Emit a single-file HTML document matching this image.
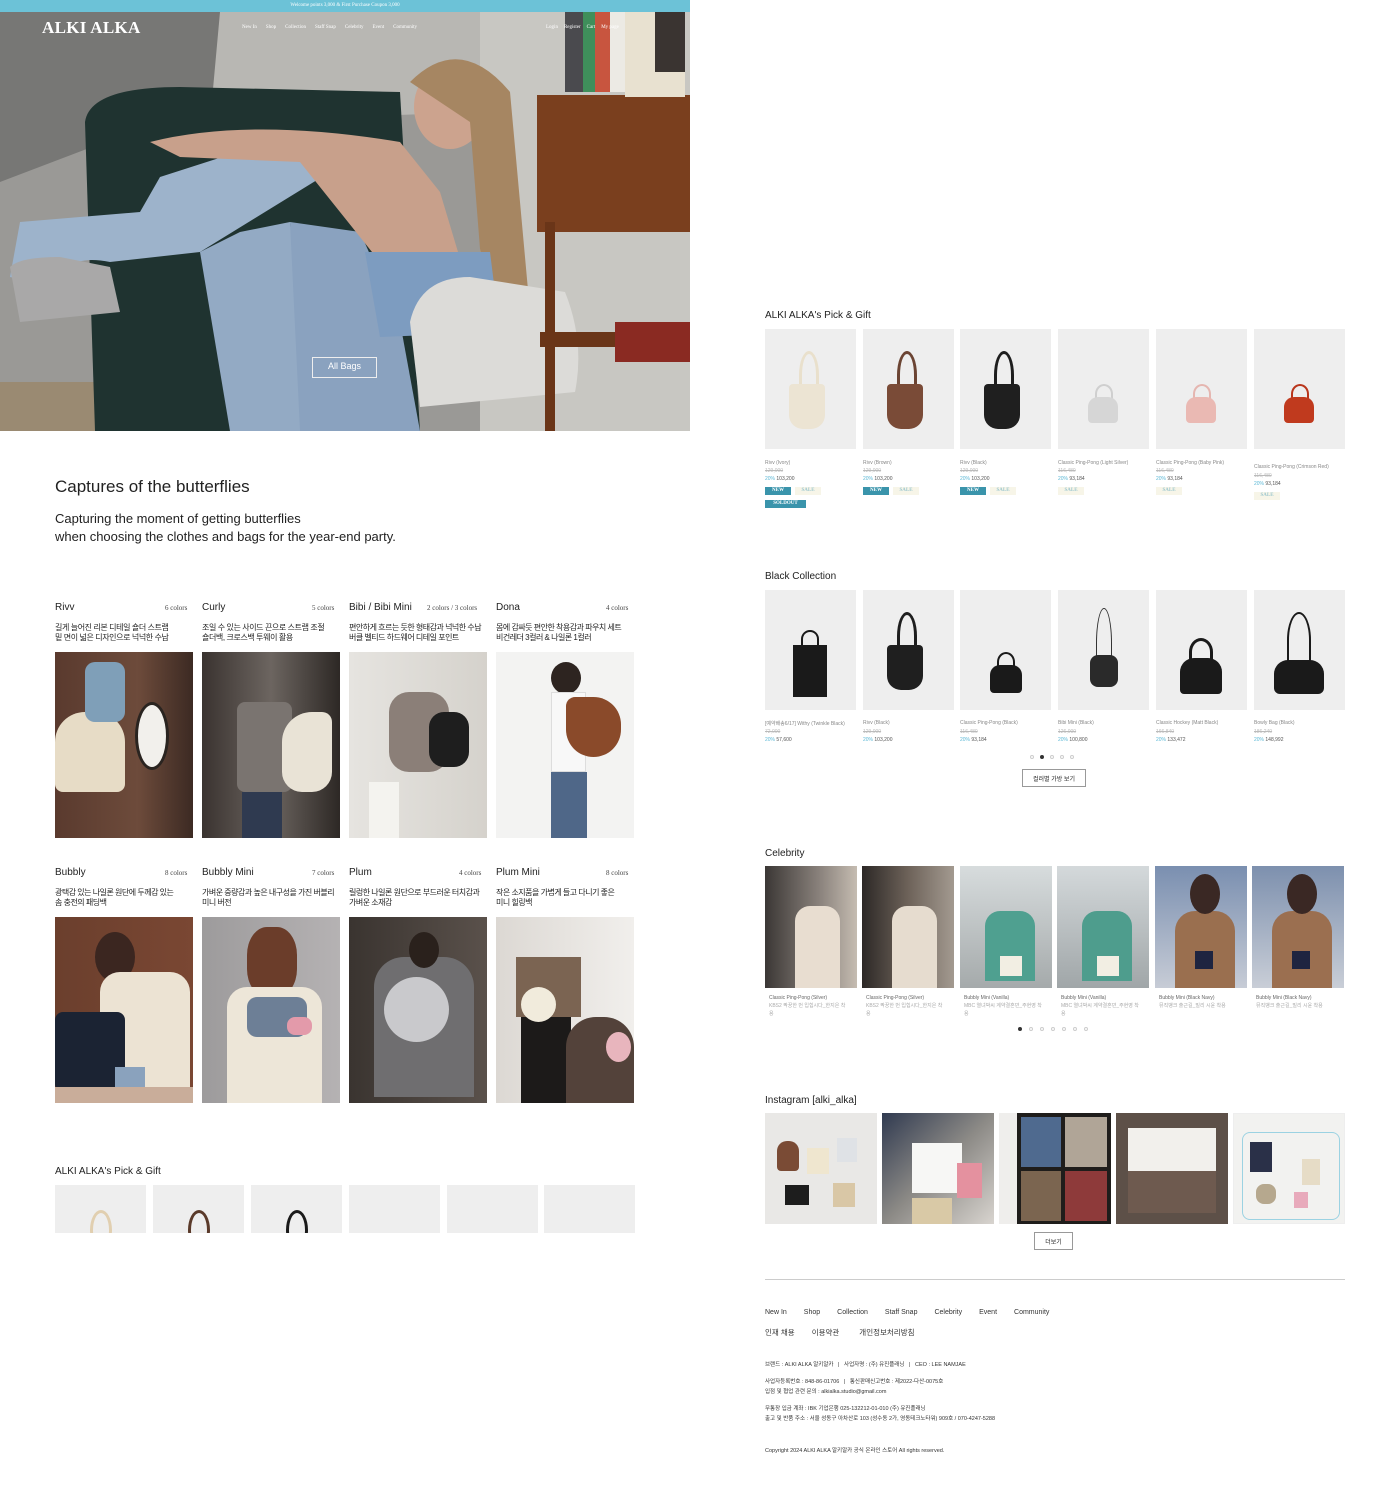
<!DOCTYPE html>
<html><head><meta charset="utf-8">
<style>
*{margin:0;padding:0;box-sizing:border-box}
body{width:1400px;height:1489px;background:#fff;position:relative;overflow:hidden;font-family:"Liberation Sans","Noto Sans CJK KR",sans-serif;color:#222}
.a{position:absolute}
.t{position:absolute;white-space:nowrap}
.tile{position:absolute;background:#eeeeee;overflow:hidden}
.nm{font-size:5px;color:#888}
.or{font-size:5px;color:#bbb;text-decoration:line-through}
.pr{font-size:5px;color:#555}.pr b{color:#5cb8d6;font-weight:normal}
.bd{position:absolute;height:8px;font:bold 5px "Liberation Serif",serif;line-height:8px;text-align:center}
.new{background:#3a94ab;color:#fff;width:26px}
.sale{background:#f7f5e8;color:#9cc7cf;width:26px}
.dot{position:absolute;width:4px;height:4px;border-radius:50%;border:1px solid #ccc}
.dot.on{background:#333;border-color:#333}
</style></head><body>

<div class="a" style="left:0;top:0;width:690px;height:12px;background:#6cc2d7"></div>
<div class="t" style="left:0;top:3px;width:690px;text-align:center;font:5px 'Liberation Serif',serif;color:#fff">Welcome points 3,000 &amp; First Purchase Coupon 3,000</div>

<div class="a" style="left:0;top:12px;width:690px;height:419px;overflow:hidden;background:#8a8a88">
<svg width="690" height="419" viewBox="0 0 690 419">
<rect width="690" height="419" fill="#9a9996"/>
<polygon points="0,0 280,0 210,90 0,170" fill="#777775"/>
<polygon points="220,0 480,0 480,100 210,110" fill="#b8b7b3"/>
<rect x="480" y="0" width="210" height="419" fill="#c8c7c2"/>
<rect x="0" y="370" width="110" height="49" fill="#9a8a72"/>
<path d="M85 110 Q90 75 180 75 L400 80 L420 419 L95 419 Z" fill="#1f3330"/>
<path d="M60 280 Q60 240 110 250 L200 240 L330 160 L350 130 L300 120 L160 165 L140 200 L20 210 L10 265 L60 275Z" fill="#9db3cb"/>
<path d="M200 240 L240 220 L290 210 L310 419 L230 419 Z" fill="#93aac4"/>
<path d="M290 210 L360 220 L400 310 L420 419 L300 419 Z" fill="#8aa2bf"/>
<path d="M10 255 Q20 245 60 245 L110 255 L120 300 L20 310 Z" fill="#a9a8a8"/>
<path d="M150 130 Q250 105 400 130 L440 180 L470 280 L380 250 L300 150 L180 145 Z" fill="#c8a08b"/>
<ellipse cx="450" cy="95" rx="36" ry="42" fill="#cca38e"/>
<path d="M410 70 Q460 20 510 80 L530 300 L485 300 L470 110 Z" fill="#a68662"/>
<path d="M365 240 L490 240 L500 320 L380 325 Z" fill="#7d9cc0"/>
<path d="M410 310 Q420 265 470 265 L565 280 Q585 330 575 380 L420 395 Z" fill="#dcdbd8"/>
<rect x="537" y="83" width="153" height="137" fill="#7a3f1e"/>
<rect x="545" y="210" width="10" height="209" fill="#6a3518"/>
<rect x="540" y="320" width="150" height="15" fill="#6a3518"/>
<rect x="615" y="310" width="75" height="40" fill="#8a2a22"/>
<rect x="565" y="0" width="18" height="80" fill="#4a4a4e"/>
<rect x="583" y="0" width="12" height="80" fill="#3f8f5b"/>
<rect x="595" y="0" width="15" height="80" fill="#c8553f"/>
<rect x="610" y="0" width="15" height="80" fill="#eceae4"/>
<rect x="625" y="0" width="60" height="85" fill="#e8e1d0"/>
<rect x="655" y="0" width="30" height="60" fill="#3a3431"/>
</svg>
</div>
<div class="t" style="left:42px;top:18px;font:bold 17px 'Liberation Serif',serif;color:#fff;letter-spacing:.3px">ALKI ALKA</div>
<div class="t" style="left:242px;top:25px;font:5px 'Liberation Serif',serif;color:#fff">
<span style="margin-right:9px">New In</span><span style="margin-right:9px">Shop</span><span style="margin-right:9px">Collection</span><span style="margin-right:9px">Staff Snap</span><span style="margin-right:9px">Celebrity</span><span style="margin-right:9px">Event</span><span>Community</span></div>
<div class="t" style="left:546px;top:25px;font:5px 'Liberation Serif',serif;color:#fff"><span style="margin-right:6px">Login</span><span style="margin-right:6px">Register</span><span style="margin-right:6px">Cart</span><span>My page</span></div>
<div class="a" style="left:312px;top:357px;width:65px;height:21px;border:1px solid #eee"></div>
<div class="t" style="left:312px;top:361px;width:65px;text-align:center;font-size:9px;color:#fff">All Bags</div>

<div class="t" style="left:55px;top:477px;font-size:17px;color:#222">Captures of the butterflies</div>
<div class="t" style="left:55px;top:510px;font-size:13px;line-height:18px;color:#222">Capturing the moment of getting butterflies<br>when choosing the clothes and bags for the year-end party.</div>

<div class="t" style="left:55px;top:602px;font-size:10px">Rivv</div><div class="t" style="left:165px;top:604px;font:7px 'Liberation Serif',serif;color:#444">6 colors</div>
<div class="t" style="left:202px;top:602px;font-size:10px">Curly</div><div class="t" style="left:312px;top:604px;font:7px 'Liberation Serif',serif;color:#444">5 colors</div>
<div class="t" style="left:349px;top:602px;font-size:10px">Bibi / Bibi Mini</div><div class="t" style="left:427px;top:604px;font:7px 'Liberation Serif',serif;color:#444">2 colors / 3 colors</div>
<div class="t" style="left:496px;top:602px;font-size:10px">Dona</div><div class="t" style="left:606px;top:604px;font:7px 'Liberation Serif',serif;color:#444">4 colors</div>
<div class="t" style="left:55px;top:623px;font-size:8px;line-height:10px;letter-spacing:-.4px">길게 늘어진 리본 디테일 숄더 스트랩<br>밑 면이 넓은 디자인으로 넉넉한 수납</div>
<div class="t" style="left:202px;top:623px;font-size:8px;line-height:10px;letter-spacing:-.4px">조일 수 있는 사이드 끈으로 스트랩 조절<br>숄더백, 크로스백 투웨이 활용</div>
<div class="t" style="left:349px;top:623px;font-size:8px;line-height:10px;letter-spacing:-.5px">편안하게 흐르는 듯한 형태감과 넉넉한 수납<br>버클 벨티드 하드웨어 디테일 포인트</div>
<div class="t" style="left:496px;top:623px;font-size:8px;line-height:10px;letter-spacing:-.5px">몸에 감싸듯 편안한 착용감과 파우치 세트<br>비건레더 3컬러 &amp; 나일론 1컬러</div>

<div class="a" style="left:55px;top:652px;width:138px;height:186px;background:linear-gradient(90deg,#5a3a2e,#6d4b3b 60%,#3c2a23)"><div class="a" style="left:0;top:60px;width:70px;height:80px;background:#e7dcc6;border-radius:30px 30px 8px 8px"></div><div class="a" style="left:80px;top:50px;width:34px;height:68px;border-radius:50%;background:#f2f0ec;border:3px solid #2a2420"></div><div class="a" style="left:30px;top:10px;width:40px;height:60px;background:#7f9fb8;border-radius:10px"></div></div>
<div class="a" style="left:202px;top:652px;width:138px;height:186px;background:linear-gradient(90deg,#3a3330,#6c6560 50%,#2d2825)"><div class="a" style="left:35px;top:50px;width:55px;height:90px;background:#7a7470;border-radius:8px"></div><div class="a" style="left:80px;top:60px;width:50px;height:80px;background:#e9e3d6;border-radius:30px 10px 20px 20px"></div><div class="a" style="left:40px;top:140px;width:40px;height:46px;background:#2f3a50"></div></div>
<div class="a" style="left:349px;top:652px;width:138px;height:186px;background:linear-gradient(90deg,#e6e4e0,#d5d2cc)"><div class="a" style="left:40px;top:40px;width:60px;height:80px;background:#8b7f78;border-radius:20px"></div><div class="a" style="left:80px;top:60px;width:40px;height:55px;background:#1e1e1e;border-radius:15px"></div><div class="a" style="left:20px;top:130px;width:30px;height:56px;background:#f4f3ef"></div></div>
<div class="a" style="left:496px;top:652px;width:138px;height:186px;background:#f3f3f2"><div class="a" style="left:55px;top:10px;width:30px;height:32px;background:#2d2420;border-radius:50%"></div><div class="a" style="left:55px;top:40px;width:35px;height:80px;background:#f8f8f8;border:1px solid #ddd"></div><div class="a" style="left:70px;top:45px;width:55px;height:60px;background:#8a4a2a;border-radius:10px 30px 30px 30px"></div><div class="a" style="left:55px;top:120px;width:36px;height:66px;background:#4f6788"></div></div>

<div class="t" style="left:55px;top:867px;font-size:10px">Bubbly</div><div class="t" style="left:165px;top:869px;font:7px 'Liberation Serif',serif;color:#444">8 colors</div>
<div class="t" style="left:202px;top:867px;font-size:10px">Bubbly Mini</div><div class="t" style="left:312px;top:869px;font:7px 'Liberation Serif',serif;color:#444">7 colors</div>
<div class="t" style="left:349px;top:867px;font-size:10px">Plum</div><div class="t" style="left:459px;top:869px;font:7px 'Liberation Serif',serif;color:#444">4 colors</div>
<div class="t" style="left:496px;top:867px;font-size:10px">Plum Mini</div><div class="t" style="left:606px;top:869px;font:7px 'Liberation Serif',serif;color:#444">8 colors</div>
<div class="t" style="left:55px;top:888px;font-size:8px;line-height:10px;letter-spacing:-.5px">광택감 있는 나일론 원단에 두께감 있는<br>솜 충전의 패딩백</div>
<div class="t" style="left:202px;top:888px;font-size:8px;line-height:10px;letter-spacing:-.5px">가벼운 중량감과 높은 내구성을 가진 버블리<br>미니 버전</div>
<div class="t" style="left:349px;top:888px;font-size:8px;line-height:10px;letter-spacing:-.5px">릴렁한 나일론 원단으로 부드러운 터치감과<br>가벼운 소재감</div>
<div class="t" style="left:496px;top:888px;font-size:8px;line-height:10px;letter-spacing:-.5px">작은 소지품을 가볍게 들고 다니기 좋은<br>미니 힐링백</div>

<div class="a" style="left:55px;top:917px;width:138px;height:186px;background:linear-gradient(90deg,#6b3f2d,#7a4733)"><div class="a" style="left:40px;top:15px;width:40px;height:50px;background:#3b2620;border-radius:50%"></div><div class="a" style="left:45px;top:55px;width:90px;height:120px;background:#ece3d3;border-radius:20px 20px 0 0"></div><div class="a" style="left:0;top:95px;width:70px;height:80px;background:#1b2333;border-radius:8px"></div><div class="a" style="left:60px;top:150px;width:30px;height:30px;background:#8aa2bd"></div><div class="a" style="left:0;top:170px;width:138px;height:16px;background:#c9ad9a"></div></div>
<div class="a" style="left:202px;top:917px;width:138px;height:186px;background:linear-gradient(90deg,#9d9b9c,#b5b2b3)"><div class="a" style="left:45px;top:10px;width:50px;height:70px;background:#6b3d2a;border-radius:40%"></div><div class="a" style="left:25px;top:70px;width:95px;height:116px;background:#ede6d8;border-radius:20px 20px 0 0"></div><div class="a" style="left:45px;top:80px;width:60px;height:40px;background:#6d7f96;border-radius:10px"></div><div class="a" style="left:85px;top:100px;width:25px;height:18px;background:#e39aaa;border-radius:8px"></div></div>
<div class="a" style="left:349px;top:917px;width:138px;height:186px;background:linear-gradient(90deg,#3a3430,#5a514b)"><div class="a" style="left:25px;top:40px;width:100px;height:140px;background:#6f6e70;border-radius:30px 30px 0 0"></div><div class="a" style="left:35px;top:60px;width:65px;height:65px;background:#c9c9cc;border-radius:50%"></div><div class="a" style="left:60px;top:15px;width:30px;height:36px;background:#2a211c;border-radius:50%"></div></div>
<div class="a" style="left:496px;top:917px;width:138px;height:186px;background:linear-gradient(90deg,#dcd8d3,#f1efec)"><div class="a" style="left:20px;top:40px;width:65px;height:60px;background:#7b6452"></div><div class="a" style="left:25px;top:100px;width:50px;height:86px;background:#1c1a19"></div><div class="a" style="left:25px;top:70px;width:35px;height:35px;background:#f1ebdc;border-radius:50%"></div><div class="a" style="left:70px;top:100px;width:68px;height:86px;background:#53423a;border-radius:30px 30px 0 0"></div><div class="a" style="left:110px;top:115px;width:25px;height:30px;background:#e8b5bd;border-radius:50%"></div></div>

<div class="t" style="left:55px;top:1166px;font-size:10px">ALKI ALKA's Pick &amp; Gift</div>
<div class="tile" style="left:55px;top:1185px;width:91px;height:48px"><div class="a" style="left:35px;top:25px;width:22px;height:40px;border:3px solid #e1cfb0;border-radius:50%"></div></div>
<div class="tile" style="left:153px;top:1185px;width:91px;height:48px"><div class="a" style="left:35px;top:25px;width:22px;height:40px;border:3px solid #5a3a2a;border-radius:50%"></div></div>
<div class="tile" style="left:251px;top:1185px;width:91px;height:48px"><div class="a" style="left:35px;top:25px;width:22px;height:40px;border:3px solid #1a1a1a;border-radius:50%"></div></div>
<div class="tile" style="left:349px;top:1185px;width:91px;height:48px"></div>
<div class="tile" style="left:447px;top:1185px;width:91px;height:48px"></div>
<div class="tile" style="left:544px;top:1185px;width:91px;height:48px"></div>

<div class="t" style="left:765px;top:310px;font-size:10px">ALKI ALKA's Pick &amp; Gift</div>
<div class="tile" style="left:765px;top:329px;width:91px;height:120px"><div class="a" style="left:34px;top:22px;width:20px;height:48px;border:3px solid #e9e0cc;border-bottom:none;border-radius:50% 50% 0 0"></div><div class="a" style="left:24px;top:55px;width:36px;height:45px;background:#ece4d3;border-radius:4px 4px 14px 14px"></div></div>
<div class="tile" style="left:863px;top:329px;width:91px;height:120px"><div class="a" style="left:34px;top:22px;width:20px;height:48px;border:3px solid #6b4433;border-bottom:none;border-radius:50% 50% 0 0"></div><div class="a" style="left:24px;top:55px;width:36px;height:45px;background:#7a4b37;border-radius:4px 4px 14px 14px"></div></div>
<div class="tile" style="left:960px;top:329px;width:91px;height:120px"><div class="a" style="left:34px;top:22px;width:20px;height:48px;border:3px solid #1e1e1e;border-bottom:none;border-radius:50% 50% 0 0"></div><div class="a" style="left:24px;top:55px;width:36px;height:45px;background:#1f1f1f;border-radius:4px 4px 14px 14px"></div></div>
<div class="tile" style="left:1058px;top:329px;width:91px;height:120px"><div class="a" style="left:37px;top:55px;width:18px;height:20px;border:2px solid #cfcfcf;border-radius:50% 50% 0 0"></div><div class="a" style="left:30px;top:68px;width:30px;height:26px;background:#d6d6d6;border-radius:10px 10px 4px 4px"></div></div>
<div class="tile" style="left:1156px;top:329px;width:91px;height:120px"><div class="a" style="left:37px;top:55px;width:18px;height:20px;border:2px solid #e5b6b0;border-radius:50% 50% 0 0"></div><div class="a" style="left:30px;top:68px;width:30px;height:26px;background:#eab9b3;border-radius:10px 10px 4px 4px"></div></div>
<div class="tile" style="left:1254px;top:329px;width:91px;height:120px"><div class="a" style="left:37px;top:55px;width:18px;height:20px;border:2px solid #b9361c;border-radius:50% 50% 0 0"></div><div class="a" style="left:30px;top:68px;width:30px;height:26px;background:#c03a1e;border-radius:10px 10px 4px 4px"></div></div>

<div class="t nm" style="left:765px;top:460px">Rivv (Ivory)</div><div class="t or" style="left:765px;top:468px">129,000</div><div class="t pr" style="left:765px;top:476px"><b>20%</b> 103,200</div>
<div class="bd new" style="left:765px;top:487px">NEW</div><div class="bd sale" style="left:795px;top:487px">SALE</div><div class="bd new" style="left:765px;top:500px;width:41px">SOLDOUT</div>
<div class="t nm" style="left:863px;top:460px">Rivv (Brown)</div><div class="t or" style="left:863px;top:468px">129,000</div><div class="t pr" style="left:863px;top:476px"><b>20%</b> 103,200</div>
<div class="bd new" style="left:863px;top:487px">NEW</div><div class="bd sale" style="left:893px;top:487px">SALE</div>
<div class="t nm" style="left:960px;top:460px">Rivv (Black)</div><div class="t or" style="left:960px;top:468px">129,000</div><div class="t pr" style="left:960px;top:476px"><b>20%</b> 103,200</div>
<div class="bd new" style="left:960px;top:487px">NEW</div><div class="bd sale" style="left:990px;top:487px">SALE</div>
<div class="t nm" style="left:1058px;top:460px">Classic Ping-Pong (Light Silver)</div><div class="t or" style="left:1058px;top:468px">116,480</div><div class="t pr" style="left:1058px;top:476px"><b>20%</b> 93,184</div>
<div class="bd sale" style="left:1058px;top:487px">SALE</div>
<div class="t nm" style="left:1156px;top:460px">Classic Ping-Pong (Baby Pink)</div><div class="t or" style="left:1156px;top:468px">116,480</div><div class="t pr" style="left:1156px;top:476px"><b>20%</b> 93,184</div>
<div class="bd sale" style="left:1156px;top:487px">SALE</div>
<div class="t nm" style="left:1254px;top:464px">Classic Ping-Pong (Crimson Red)</div><div class="t or" style="left:1254px;top:473px">116,480</div><div class="t pr" style="left:1254px;top:481px"><b>20%</b> 93,184</div>
<div class="bd sale" style="left:1254px;top:492px">SALE</div>

<div class="t" style="left:765px;top:571px;font-size:10px">Black Collection</div>
<div class="tile" style="left:765px;top:590px;width:91px;height:120px"><div class="a" style="left:36px;top:40px;width:18px;height:18px;border:2px solid #1a1a1a;border-radius:50% 50% 0 0"></div><div class="a" style="left:28px;top:55px;width:34px;height:52px;background:#1a1a1a"></div></div>
<div class="tile" style="left:863px;top:590px;width:91px;height:120px"><div class="a" style="left:34px;top:22px;width:20px;height:48px;border:3px solid #1e1e1e;border-bottom:none;border-radius:50% 50% 0 0"></div><div class="a" style="left:24px;top:55px;width:36px;height:45px;background:#1f1f1f;border-radius:4px 4px 14px 14px"></div></div>
<div class="tile" style="left:960px;top:590px;width:91px;height:120px"><div class="a" style="left:37px;top:62px;width:18px;height:20px;border:2px solid #1a1a1a;border-radius:50% 50% 0 0"></div><div class="a" style="left:30px;top:75px;width:32px;height:28px;background:#1a1a1a;border-radius:10px 10px 4px 4px"></div></div>
<div class="tile" style="left:1058px;top:590px;width:91px;height:120px"><div class="a" style="left:38px;top:18px;width:16px;height:70px;border:1px solid #333;border-bottom:none;border-radius:50% 50% 0 0"></div><div class="a" style="left:32px;top:65px;width:28px;height:32px;background:#2a2a2a;border-radius:8px"></div></div>
<div class="tile" style="left:1156px;top:590px;width:91px;height:120px"><div class="a" style="left:33px;top:48px;width:24px;height:28px;border:3px solid #1a1a1a;border-radius:50% 50% 0 0"></div><div class="a" style="left:24px;top:68px;width:42px;height:36px;background:#1a1a1a;border-radius:14px 14px 4px 4px"></div></div>
<div class="tile" style="left:1254px;top:590px;width:91px;height:120px"><div class="a" style="left:33px;top:22px;width:24px;height:56px;border:2px solid #1a1a1a;border-bottom:none;border-radius:50% 50% 0 0"></div><div class="a" style="left:20px;top:70px;width:50px;height:34px;background:#1a1a1a;border-radius:14px 14px 6px 6px"></div></div>
<div class="t nm" style="left:765px;top:720px">[예약배송6/17] Withy (Twinkle Black)</div><div class="t or" style="left:765px;top:729px">72,000</div><div class="t pr" style="left:765px;top:737px"><b>20%</b> 57,600</div>
<div class="t nm" style="left:863px;top:720px">Rivv (Black)</div><div class="t or" style="left:863px;top:729px">129,000</div><div class="t pr" style="left:863px;top:737px"><b>20%</b> 103,200</div>
<div class="t nm" style="left:960px;top:720px">Classic Ping-Pong (Black)</div><div class="t or" style="left:960px;top:729px">116,480</div><div class="t pr" style="left:960px;top:737px"><b>20%</b> 93,184</div>
<div class="t nm" style="left:1058px;top:720px">Bibi Mini (Black)</div><div class="t or" style="left:1058px;top:729px">126,000</div><div class="t pr" style="left:1058px;top:737px"><b>20%</b> 100,800</div>
<div class="t nm" style="left:1156px;top:720px">Classic Hockey (Matt Black)</div><div class="t or" style="left:1156px;top:729px">166,840</div><div class="t pr" style="left:1156px;top:737px"><b>20%</b> 133,472</div>
<div class="t nm" style="left:1254px;top:720px">Bowly Bag (Black)</div><div class="t or" style="left:1254px;top:729px">186,240</div><div class="t pr" style="left:1254px;top:737px"><b>20%</b> 148,992</div>
<div class="dot" style="left:1030px;top:755px"></div><div class="dot on" style="left:1040px;top:755px"></div><div class="dot" style="left:1050px;top:755px"></div><div class="dot" style="left:1060px;top:755px"></div><div class="dot" style="left:1070px;top:755px"></div>
<div class="a" style="left:1022px;top:769px;width:64px;height:18px;border:1px solid #999"></div>
<div class="t" style="left:1022px;top:774px;width:64px;text-align:center;font-size:6px">컬러별 가방 보기</div>

<div class="t" style="left:765px;top:848px;font-size:10px">Celebrity</div>
<div class="a" style="left:765px;top:866px;width:92px;height:122px;background:linear-gradient(90deg,#3b3735,#8b837d 60%,#c5bcb1)"><div class="a" style="left:30px;top:40px;width:45px;height:82px;background:#e8ddd0;border-radius:15px 15px 0 0"></div></div>
<div class="a" style="left:862px;top:866px;width:92px;height:122px;background:linear-gradient(90deg,#2c2826,#6d6259 50%,#a39a90)"><div class="a" style="left:30px;top:40px;width:45px;height:82px;background:#e6dccf;border-radius:15px 15px 0 0"></div></div>
<div class="a" style="left:960px;top:866px;width:92px;height:122px;background:linear-gradient(180deg,#d7dcdd,#a5aaab)"><div class="a" style="left:25px;top:45px;width:50px;height:70px;background:#4fa090;border-radius:15px 15px 0 0"></div><div class="a" style="left:40px;top:90px;width:22px;height:20px;background:#f2eee3"></div></div>
<div class="a" style="left:1057px;top:866px;width:92px;height:122px;background:linear-gradient(180deg,#d4d9db,#a0a6a8)"><div class="a" style="left:25px;top:45px;width:50px;height:70px;background:#4e9d8d;border-radius:15px 15px 0 0"></div><div class="a" style="left:40px;top:90px;width:22px;height:20px;background:#f2eee3"></div></div>
<div class="a" style="left:1155px;top:866px;width:92px;height:122px;background:linear-gradient(180deg,#7a8fb0,#c7ccd6)"><div class="a" style="left:20px;top:45px;width:60px;height:77px;background:#9a6f4f;border-radius:20px 20px 0 0"></div><div class="a" style="left:35px;top:8px;width:30px;height:40px;background:#3a2824;border-radius:50%"></div><div class="a" style="left:40px;top:85px;width:18px;height:18px;background:#1e2440"></div></div>
<div class="a" style="left:1252px;top:866px;width:92px;height:122px;background:linear-gradient(180deg,#7d90ae,#c9ced7)"><div class="a" style="left:20px;top:45px;width:60px;height:77px;background:#9b6f50;border-radius:20px 20px 0 0"></div><div class="a" style="left:35px;top:8px;width:30px;height:40px;background:#3a2824;border-radius:50%"></div><div class="a" style="left:40px;top:85px;width:18px;height:18px;background:#1e2440"></div></div>
<div class="t nm" style="left:769px;top:994px;line-height:8px;color:#666">Classic Ping-Pong (Silver)<br><span style="color:#aaa">KBS2 짝꿍한 번 입힙시다_한지은 착<br>용</span></div>
<div class="t nm" style="left:866px;top:994px;line-height:8px;color:#666">Classic Ping-Pong (Silver)<br><span style="color:#aaa">KBS2 짝꿍한 번 입힙시다_한지은 착<br>용</span></div>
<div class="t nm" style="left:964px;top:994px;line-height:8px;color:#666">Bubbly Mini (Vanilla)<br><span style="color:#aaa">MBC 열녀박씨 계약결혼뎐_주현영 착<br>용</span></div>
<div class="t nm" style="left:1061px;top:994px;line-height:8px;color:#666">Bubbly Mini (Vanilla)<br><span style="color:#aaa">MBC 열녀박씨 계약결혼뎐_주현영 착<br>용</span></div>
<div class="t nm" style="left:1159px;top:994px;line-height:8px;color:#666">Bubbly Mini (Black Navy)<br><span style="color:#aaa">뮤직뱅크 출근길_빌리 시윤 착용</span></div>
<div class="t nm" style="left:1256px;top:994px;line-height:8px;color:#666">Bubbly Mini (Black Navy)<br><span style="color:#aaa">뮤직뱅크 출근길_빌리 시윤 착용</span></div>
<div class="dot on" style="left:1018px;top:1027px"></div><div class="dot" style="left:1029px;top:1027px"></div><div class="dot" style="left:1040px;top:1027px"></div><div class="dot" style="left:1051px;top:1027px"></div><div class="dot" style="left:1062px;top:1027px"></div><div class="dot" style="left:1073px;top:1027px"></div><div class="dot" style="left:1084px;top:1027px"></div>

<div class="t" style="left:765px;top:1095px;font-size:10px">Instagram [alki_alka]</div>
<div class="a" style="left:765px;top:1113px;width:112px;height:111px;background:#e9e8e6"><div class="a" style="left:12px;top:28px;width:22px;height:30px;background:#7a4b35;border-radius:10px 10px 4px 4px"></div><div class="a" style="left:42px;top:35px;width:22px;height:26px;background:#efe6cf"></div><div class="a" style="left:72px;top:25px;width:20px;height:24px;background:#dfe2e6"></div><div class="a" style="left:20px;top:72px;width:24px;height:20px;background:#1d1d1d"></div><div class="a" style="left:68px;top:70px;width:22px;height:24px;background:#d9c7a6"></div></div>
<div class="a" style="left:882px;top:1113px;width:112px;height:111px;background:linear-gradient(135deg,#303a50,#8c8a86 50%,#d8d4cf)"><div class="a" style="left:30px;top:30px;width:50px;height:50px;background:#f7f7f5"></div><div class="a" style="left:75px;top:50px;width:25px;height:35px;background:#e4919f"></div><div class="a" style="left:30px;top:85px;width:40px;height:26px;background:#d9c9a6"></div></div>
<div class="a" style="left:999px;top:1113px;width:112px;height:111px;background:#1f1d1b"><div class="a" style="left:0;top:0;width:18px;height:111px;background:#efeeec"></div><div class="a" style="left:22px;top:4px;width:40px;height:50px;background:#4f6a8f"></div><div class="a" style="left:66px;top:4px;width:42px;height:50px;background:#b0a597"></div><div class="a" style="left:22px;top:58px;width:40px;height:50px;background:#7b6550"></div><div class="a" style="left:66px;top:58px;width:42px;height:50px;background:#8e3a3a"></div></div>
<div class="a" style="left:1116px;top:1113px;width:112px;height:111px;background:#5d5048"><div class="a" style="left:12px;top:15px;width:88px;height:45px;background:#f2f0ec"></div><div class="a" style="left:12px;top:58px;width:88px;height:42px;background:#6e5a4f"></div></div>
<div class="a" style="left:1233px;top:1113px;width:112px;height:111px;background:#f2f2f0;border:1px solid #eee"><div class="a" style="left:8px;top:18px;width:98px;height:88px;border:1px solid #9bd2e2;border-radius:8px"></div><div class="a" style="left:16px;top:28px;width:22px;height:30px;background:#2a3048"></div><div class="a" style="left:68px;top:45px;width:18px;height:26px;background:#e6dcc6"></div><div class="a" style="left:22px;top:70px;width:20px;height:20px;background:#b6a88e;border-radius:8px"></div><div class="a" style="left:60px;top:78px;width:14px;height:16px;background:#e8aabb"></div></div>
<div class="a" style="left:1034px;top:1232px;width:39px;height:18px;border:1px solid #999"></div>
<div class="t" style="left:1034px;top:1237px;width:39px;text-align:center;font-size:6px">더보기</div>

<div class="a" style="left:765px;top:1279px;width:580px;height:1px;background:#ccc"></div>
<div class="t" style="left:765px;top:1309px;font-size:7px;color:#333"><span style="margin-right:17px">New In</span><span style="margin-right:17px">Shop</span><span style="margin-right:17px">Collection</span><span style="margin-right:17px">Staff Snap</span><span style="margin-right:17px">Celebrity</span><span style="margin-right:17px">Event</span><span>Community</span></div>
<div class="t" style="left:765px;top:1327px;font-size:7.5px;color:#333"><span style="margin-right:17px">인재 채용</span><span style="margin-right:20px">이용약관</span><span>개인정보처리방침</span></div>
<div class="t" style="left:765px;top:1360px;font-size:5.5px;line-height:10px;color:#333">브랜드 : ALKI ALKA 알키알카 &nbsp; | &nbsp; 사업자명 : (주) 유진플래닝 &nbsp; | &nbsp; CEO : LEE NAMJAE</div>
<div class="t" style="left:765px;top:1377px;font-size:5.5px;line-height:10px;color:#333">사업자등록번호 : 848-86-01706 &nbsp; | &nbsp; 통신판매신고번호 : 제2022-다산-0075호<br>입점 및 협업 관련 문의 : alkialka.studio@gmail.com</div>
<div class="t" style="left:765px;top:1404px;font-size:5.5px;line-height:10px;color:#333">무통장 입금 계좌 : IBK 기업은행 025-132212-01-010 (주) 유진플래닝<br>출고 및 반품 주소 : 서울 성동구 아차산로 103 (성수동 2가, 영동테크노타워) 909호 / 070-4247-5288</div>
<div class="t" style="left:765px;top:1446px;font-size:5.5px;color:#333">Copyright 2024 ALKI ALKA 알키알카 공식 온라인 스토어 All rights reserved.</div>
</body></html>
